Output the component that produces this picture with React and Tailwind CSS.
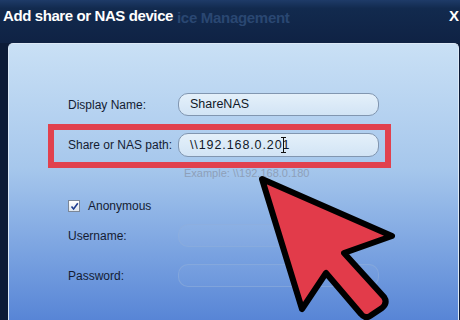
import React from "react";

const inputCls =
  "h-[23px] w-[201px] rounded-[10px] border border-[#8196b0] bg-linear-to-b from-[#e4f0fa] to-[#d2e4f5] flex items-center pl-[11px] text-[#111827]";
const fadedInputCls =
  "h-[23px] w-[201px] rounded-[10px] border border-[#8eaedb]/60 bg-white/[0.03]";

export default function App() {
  return (
    <div className="relative w-[460px] h-[320px] overflow-hidden bg-[#0c1b37] font-['Liberation_Sans',Arial,sans-serif]">
      {/* header */}
      <div className="relative h-[43px] bg-linear-to-b from-[#1e3b68] via-[#122a4e] via-20% to-[#0f2244]">
        <span className="absolute left-[3px] top-[6px] text-[15px] font-bold leading-[20px] tracking-[-0.4px] text-white whitespace-nowrap">
          Add share or NAS device
        </span>
        <span className="absolute left-[177px] top-[8px] text-[15px] font-bold leading-[20px] tracking-[-0.3px] text-[#2a4772] whitespace-nowrap">
          ice Management
        </span>
        <span className="absolute left-[449px] top-[7px] text-[15px] font-bold leading-[18px] text-white">
          X
        </span>
      </div>

      {/* panel */}
      <div className="ml-[8px] mr-[1px] h-[277px] rounded-t-[5px] border border-b-0 border-[#dce9f6] bg-linear-to-b from-[#c9e0f5] via-[#a6c7ec] via-45% to-[#5885d6] pl-[59px] pt-[49px] text-[12px] text-[#141c33]">
        <div className="flex items-center">
          <div className="w-[110px]">Display Name:</div>
          <div className={inputCls + " text-[12.5px]"}>ShareNAS</div>
        </div>
        <div className="mt-[17px] flex items-center">
          <div className="w-[110px] whitespace-nowrap">Share or NAS path:</div>
          <div className={inputCls + " h-[24px] text-[12.5px] tracking-[0.9px]"}>
            \\192.168.0.201
          </div>
        </div>
        <div className="mt-[10px] h-[12px] pl-[116px] text-[11px] leading-[12px] text-[#8ea0b9]">
          Example: \\192.168.0.180
        </div>
        <div className="mt-[21px] flex h-[12px] items-center">
          <div className="flex h-[12px] w-[12px] items-center justify-center border border-[#7b8798] bg-linear-to-b from-white to-[#dfe6ee]">
            <svg width="9" height="9" viewBox="0 0 9 9">
              <path d="M1.5 4.5 L3.6 7 L7.8 1.2" fill="none" stroke="#1d3c8f" strokeWidth="1.6" />
            </svg>
          </div>
          <span className="ml-[8px]">Anonymous</span>
        </div>
        <div className="mt-[12px] flex items-center">
          <div className="w-[110px]">Username:</div>
          <div className={fadedInputCls}></div>
        </div>
        <div className="mt-[17px] flex items-center">
          <div className="w-[110px]">Password:</div>
          <div className={fadedInputCls}></div>
        </div>
      </div>

      {/* red highlight box */}
      <div className="absolute left-[48px] top-[124px] h-[44px] w-[343px] border-[6px] border-[#e1414e]"></div>

      {/* overlays: I-beam + big arrow */}
      <svg className="pointer-events-none absolute left-0 top-0" width="460" height="320" viewBox="0 0 460 320">
        <path d="M281 137.5 H286 M283.5 137.5 V152.5 M281 152.5 H286" stroke="#111" strokeWidth="1" fill="none" />
        <path
          d="M262 179 L392 236 L344 253 L384 297 Q388 303 382 308 L370 316 Q365 319 361 314 L326 273 L302 309 Z"
          fill="#e23b4a"
          stroke="#000"
          strokeWidth="6"
          strokeLinejoin="round"
        />
      </svg>
    </div>
  );
}
